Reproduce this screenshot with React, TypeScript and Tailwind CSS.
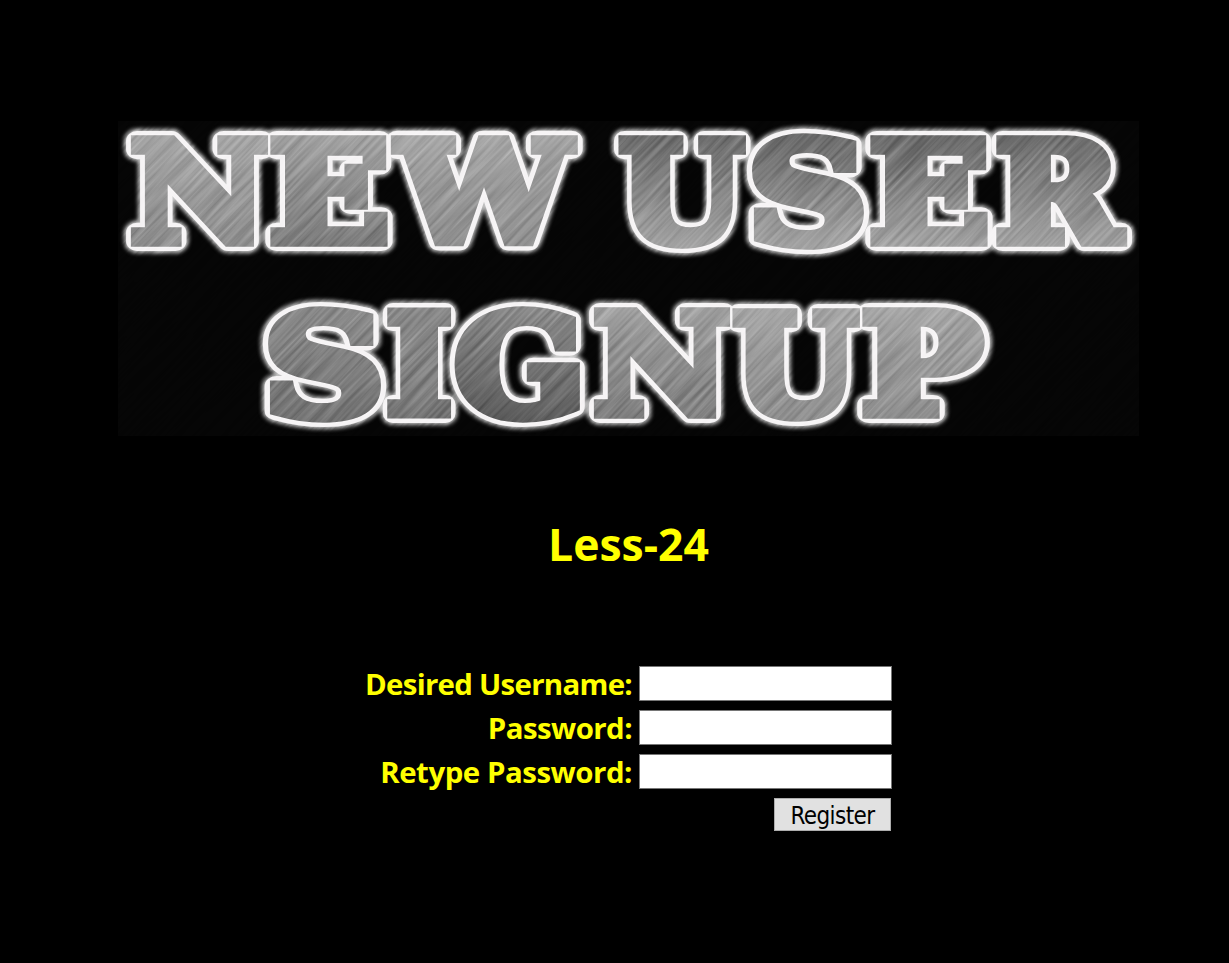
import { useMemo } from "react";

type Glyph = { ch: string; left: number; right: number; top: number; bottom: number; tone: string };

// Ink box of every banner letter, relative to the banner's own corner.
const glyphs: Glyph[] = [
  { ch: "N", left: 12, right: 151, top: 14.5, bottom: 126, tone: "light" },
  { ch: "E", left: 152, right: 270, top: 14.5, bottom: 126, tone: "fade" },
  { ch: "W", left: 272, right: 460, top: 14.5, bottom: 126, tone: "light" },
  { ch: "U", left: 500, right: 629, top: 14.5, bottom: 128, tone: "rise" },
  { ch: "S", left: 633, right: 747, top: 12, bottom: 129, tone: "rise" },
  { ch: "E", left: 752, right: 870, top: 14.5, bottom: 126, tone: "rise" },
  { ch: "R", left: 878, right: 1010, top: 14.5, bottom: 126, tone: "rise" },
  { ch: "S", left: 149, right: 264, top: 186, bottom: 302, tone: "mid" },
  { ch: "I", left: 269, right: 334, top: 187.5, bottom: 298, tone: "mid" },
  { ch: "G", left: 336, right: 463, top: 186, bottom: 302, tone: "dark" },
  { ch: "N", left: 475, right: 613, top: 187.5, bottom: 298, tone: "fade" },
  { ch: "U", left: 614, right: 743, top: 187.5, bottom: 301, tone: "light" },
  { ch: "P", left: 744, right: 867, top: 187.5, bottom: 298, tone: "light" },
];

const tones: [string, string, string, string][] = [
  ["light", "#a6a6a6", "#979797", "#8e8e8e"],
  ["fade", "#a2a2a2", "#8c8c8c", "#7c7c7c"],
  ["rise", "#6c6c6c", "#868686", "#a2a2a2"],
  ["mid", "#888888", "#808080", "#727272"],
  ["dark", "#898989", "#727272", "#5c5c5c"],
];

const SIZE = 133;
const BODY = 11;
const FONT = '"DejaVu Serif", serif';

function placeGlyphs() {
  const ctx = document.createElement("canvas").getContext("2d")!;
  ctx.font = `bold ${SIZE}px ${FONT}`;
  return glyphs.map((g) => {
    const m = ctx.measureText(g.ch);
    const inkLeft = -m.actualBoundingBoxLeft;
    const inkW = m.actualBoundingBoxRight - inkLeft;
    const inkH = m.actualBoundingBoxAscent + m.actualBoundingBoxDescent;
    const sx = (g.right - g.left) / (inkW + BODY);
    const sy = (g.bottom - g.top) / (inkH + BODY);
    const x = g.left - (inkLeft - BODY / 2) * sx;
    const y = g.top + (m.actualBoundingBoxAscent + BODY / 2) * sy;
    return { ch: g.ch, tone: `url(#${g.tone})`, transform: `translate(${x} ${y}) scale(${sx} ${sy})` };
  });
}

function Banner() {
  const placed = useMemo(placeGlyphs, []);
  const layer = (color: string, width: number) =>
    placed.map((p, i) => (
      <text key={i} transform={p.transform} fill={color} stroke={color} strokeWidth={width} strokeLinejoin="round">
        {p.ch}
      </text>
    ));
  return (
    <svg
      className="block h-[315px] w-[1021px] overflow-visible"
      viewBox="0 0 1021 315"
      fontFamily={FONT}
      fontWeight="bold"
      fontSize={SIZE}
      role="img"
      aria-label="NEW USER SIGNUP"
    >
      <defs>
        <filter id="glow" x="-5%" y="-10%" width="110%" height="120%">
          <feGaussianBlur stdDeviation="2" />
        </filter>
        <filter id="soft" x="-5%" y="-10%" width="110%" height="120%">
          <feGaussianBlur stdDeviation="0.7" />
        </filter>
        <filter id="brush" x="0" y="0" width="100%" height="100%" colorInterpolationFilters="sRGB">
          <feTurbulence type="fractalNoise" baseFrequency="0.012 0.3" numOctaves="2" seed="7" />
          <feColorMatrix values="1.2 0 0 0 -0.1  1.2 0 0 0 -0.1  1.2 0 0 0 -0.1  0 0 0 0 1" />
        </filter>
        <clipPath id="frame">
          <rect width="1021" height="315" />
        </clipPath>
        {tones.map(([id, top, middle, bottom]) => (
          <linearGradient key={id} id={id} gradientUnits="userSpaceOnUse" x1="0" y1="-100" x2="0" y2="4">
            <stop offset="0" stopColor={top} />
            <stop offset="0.5" stopColor={middle} />
            <stop offset="1" stopColor={bottom} />
          </linearGradient>
        ))}
      </defs>
      <rect width="1021" height="315" fill="#050505" />
      <g filter="url(#glow)">{layer("#c8c8c8", BODY + 12)}</g>
      <g filter="url(#soft)">{layer("#f6f4f5", BODY + 8.5)}</g>
      {placed.map((p, i) => (
        <g key={i} strokeLinejoin="miter">
          <text transform={p.transform} fill="#f8f6f7" stroke="#f8f6f7" strokeWidth={BODY + 2.5}>
            {p.ch}
          </text>
          <text transform={p.transform} fill={p.tone} stroke={p.tone} strokeWidth={BODY}>
            {p.ch}
          </text>
        </g>
      ))}
      <g clipPath="url(#frame)" style={{ mixBlendMode: "overlay" }} opacity="0.27">
        <g transform="rotate(-46 510 157)">
          <rect x="-100" y="-450" width="1220" height="1220" filter="url(#brush)" />
        </g>
      </g>
    </svg>
  );
}

type FieldProps = { label: string; type: string; name: string; spacing: string };

function Field({ label, type, name, spacing }: FieldProps) {
  return (
    <label className="flex h-[35px] items-center justify-end">
      <span className={`mr-[7px] whitespace-nowrap pt-[2px] text-[29.4px] leading-[35px] font-bold text-[#ffff00] ${spacing}`}>{label}</span>
      <input type={type} name={name} className="h-[35px] w-[253px] shrink-0 border border-[#767676] bg-white px-1 text-black outline-none" />
    </label>
  );
}

export default function App() {
  return (
    <main className="flex h-[963px] w-[1229px] flex-col items-center overflow-hidden bg-black pt-[121px] pl-7 font-['Open_Sans','Noto_Sans',sans-serif]">
      <Banner />
      <h1 className="mt-[78px] text-[44.5px] leading-[60px] font-bold text-[#ffff00]">Less-24</h1>
      <form className="mt-[92px] flex w-[527px] flex-col gap-[9px]" onSubmit={(e) => e.preventDefault()}>
        <Field label="Desired Username:" type="text" name="username" spacing="tracking-[-0.7px]" />
        <Field label="Password:" type="password" name="password" spacing="tracking-[-0.55px]" />
        <Field label="Retype Password:" type="password" name="re_password" spacing="tracking-[-0.45px]" />
        <button
          type="submit"
          className="mr-px h-[33px] w-[117px] self-end border border-[#adadad] bg-[#e1e1e1] pt-[3px] font-['DejaVu_Sans_Condensed','DejaVu_Sans',sans-serif] text-[24px] leading-[28px] tracking-[-0.6px] text-black"
        >
          Register
        </button>
      </form>
    </main>
  );
}
